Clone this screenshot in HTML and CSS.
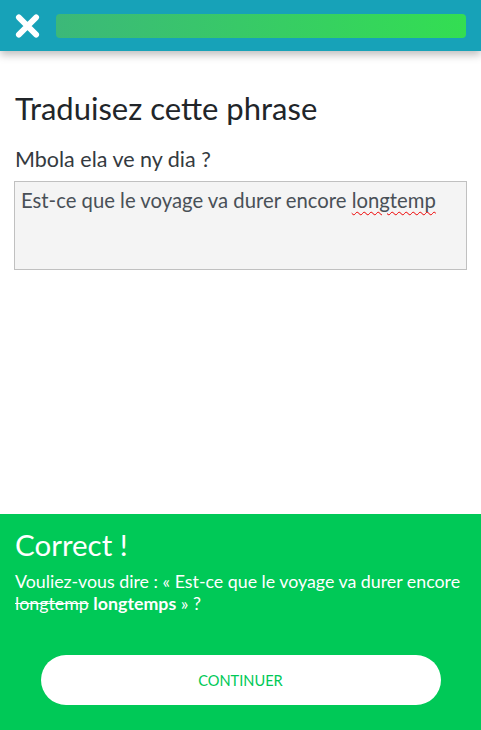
FILE: index.html
```html
<!DOCTYPE html>
<html lang="fr">
<head>
<meta charset="utf-8">
<link rel="stylesheet" href="styles.css">
</head>
<body>
<div class="app">
  <header class="topbar">
    <button class="close" aria-label="Fermer">
      <svg width="26" height="26" viewBox="0 0 26 26"><path d="M4 4 L22 22 M22 4 L4 22" stroke="#fff" stroke-width="6" stroke-linecap="round"/></svg>
    </button>
    <div class="progress"></div>
  </header>
  <main class="content">
    <h1 class="title">Traduisez cette phrase</h1>
    <p class="prompt">Mbola ela ve ny dia ?</p>
    <div class="answer">Est-ce que le voyage va durer encore <span class="typo">longtemp</span></div>
  </main>
  <footer class="result">
    <h2 class="result-title">Correct !</h2>
    <p class="result-text">Vouliez-vous dire : « Est-ce que le voyage va durer encore <s>longtemp</s> <b>longtemps</b> » ?</p>
    <div class="actions"><button class="continue">CONTINUER</button></div>
  </footer>
</div>
</body>
</html>
```
FILE: styles.css
```css
* { box-sizing: border-box; }
html, body { margin: 0; padding: 0; }
body { font-family: Lato, "Noto Sans", sans-serif; background: #fff; }
.app { display: flex; flex-direction: column; height: 730px; }
.topbar {
  height: 51px; background: #17a2b8; display: flex; align-items: center;
  padding: 0 15px 0 15px; gap: 16px;
  box-shadow: 0 4px 8px rgba(0,0,0,0.25); position: relative; z-index: 1;
}
.close { background: none; border: 0; padding: 0; width: 25px; height: 25px; display: flex; align-items: center; justify-content: center; }
.progress {
  flex: 1; height: 24px; border-radius: 4px;
  background: linear-gradient(90deg, #3cb879, #33de52);
}
.content { flex: 1; padding: 38px 14px 0 14px; }
.title { margin: 0 0 0 1px; font-weight: 400; font-size: 31px; line-height: 38px; color: #212529; }
.prompt { margin: 20px 0 0 1px; font-size: 21.5px; line-height: 24px; color: #343a40; }
.answer {
  margin-top: 10px; height: 89px; background: #f4f4f4; border: 1px solid #c0c0c0;
  padding: 5px 6px; font-size: 20.3px; line-height: 26px; color: #495057;
}
.typo { text-decoration: underline wavy #e00; text-decoration-thickness: 1px; text-underline-offset: 3px; }
.result { height: 216px; background: #00c957; color: #fff; padding: 14px 15px 0 15px; display: flex; flex-direction: column; }
.result-title { margin: 0; font-weight: 400; font-size: 29.5px; line-height: 34px; }
.result-text { margin: 8px 0 0 0; font-size: 17.8px; line-height: 22px; }
.result-text b { font-weight: 700; }
.actions { display: flex; justify-content: center; margin-top: auto; padding-bottom: 25px; }
.continue {
  width: 400px; height: 50px; border-radius: 25px; background: #fff; border: 0;
  color: #00c957; font-family: inherit; font-size: 14.6px; letter-spacing: 0;
}
```
